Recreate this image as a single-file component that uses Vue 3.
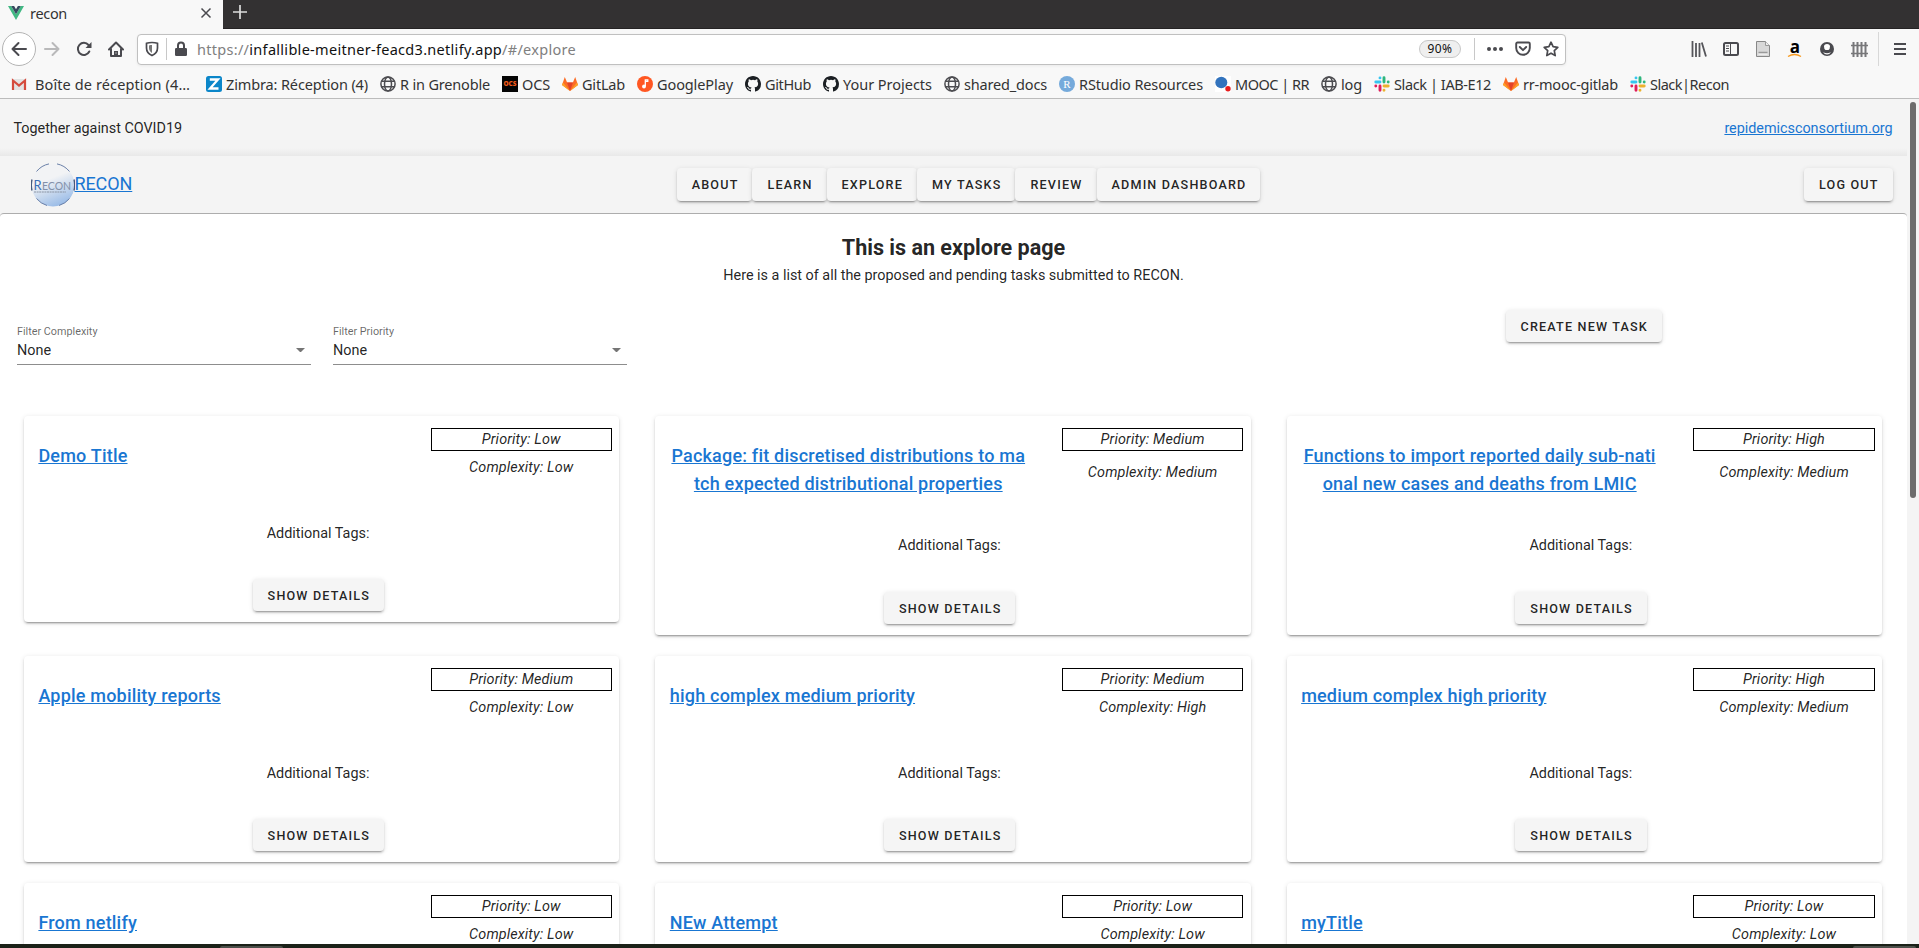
<script setup>
// Spreads the letters of a label so that it fills the given width.
const vFit = {
  mounted(el, binding) {
    el.style.letterSpacing = '0px'
    const natural = el.getBoundingClientRect().width
    el.style.letterSpacing = (binding.value - natural) / el.textContent.length + 'px'
  },
}

const bookmarks = [
  { icon: 'gmail', label: 'Boîte de réception (4…', width: 155 },
  { icon: 'zimbra', label: 'Zimbra: Réception (4)', width: 142 },
  { icon: 'globe', label: 'R in Grenoble', width: 90 },
  { icon: 'ocs', label: 'OCS', width: 28 },
  { icon: 'gitlab', label: 'GitLab', width: 43 },
  { icon: 'play', label: 'GooglePlay', width: 76 },
  { icon: 'github', label: 'GitHub', width: 46 },
  { icon: 'github', label: 'Your Projects', width: 89 },
  { icon: 'globe', label: 'shared_docs', width: 83 },
  { icon: 'rstudio', label: 'RStudio Resources', width: 124 },
  { icon: 'mooc', label: 'MOOC | RR', width: 74 },
  { icon: 'globe', label: 'log', width: 21 },
  { icon: 'slack', label: 'Slack | IAB-E12', width: 97 },
  { icon: 'gitlab', label: 'rr-mooc-gitlab', width: 95 },
  { icon: 'slack', label: 'Slack|Recon', width: 79 },
]

const nav = ['About', 'Learn', 'Explore', 'My tasks', 'Review', 'Admin dashboard']
const filters = ['Filter Complexity', 'Filter Priority']

const tasks = [
  { title: ['Demo Title'], priority: 'Low', complexity: 'Low' },
  { title: ['Package: fit discretised distributions to ma', 'tch expected distributional properties'], priority: 'Medium', complexity: 'Medium' },
  { title: ['Functions to import reported daily sub-nati', 'onal new cases and deaths from LMIC'], priority: 'High', complexity: 'Medium' },
  { title: ['Apple mobility reports'], priority: 'Medium', complexity: 'Low' },
  { title: ['high complex medium priority'], priority: 'Medium', complexity: 'High' },
  { title: ['medium complex high priority'], priority: 'High', complexity: 'Medium' },
  { title: ['From netlify'], priority: 'Low', complexity: 'Low' },
  { title: ['NEw Attempt'], priority: 'Low', complexity: 'Low' },
  { title: ['myTitle'], priority: 'Low', complexity: 'Low' },
]
</script>

<template>
  <div class="window">
    <div class="tabs">
      <div class="tab">
        <svg class="vue" width="16" height="14" viewBox="0 0 16 14">
          <path d="M0 0h3.2L8 8.3 12.8 0H16L8 14z" fill="#41b883" />
          <path d="M3.2 0H6.1L8 3.3 9.9 0h2.9L8 8.3z" fill="#35495e" />
        </svg>
        <span v-fit="37" class="tab-name">recon</span>
        <svg class="close" width="12" height="12" viewBox="0 0 12 12"><path d="M1.5 1.5l9 9M10.5 1.5l-9 9" stroke="#4a4a4f" stroke-width="1.5" /></svg>
      </div>
      <svg class="plus" width="14" height="14" viewBox="0 0 14 14"><path d="M7 0v14M0 7h14" stroke="#ddd" stroke-width="1.7" /></svg>
    </div>

    <div class="toolbar">
      <div class="back">
        <svg width="16" height="16" viewBox="0 0 16 16"><path d="M15 8H1.5M7.5 2L1.5 8l6 6" fill="none" stroke="#4a4a4f" stroke-width="2" stroke-linecap="round" stroke-linejoin="round" /></svg>
      </div>
      <svg class="tool" width="16" height="16" viewBox="0 0 16 16"><path d="M1 8h13.5M8.5 2l6 6-6 6" fill="none" stroke="#b9b9ba" stroke-width="2" stroke-linecap="round" stroke-linejoin="round" /></svg>
      <svg class="tool" width="16" height="16" viewBox="0 0 16 16"><path d="M13.3 10.5A6 6 0 1 1 12.5 4" fill="none" stroke="#4a4a4f" stroke-width="2" stroke-linecap="round" /><path d="M15.5 1v6h-6z" fill="#4a4a4f" /></svg>
      <svg class="tool" width="16" height="16" viewBox="0 0 16 16"><path d="M1 8.5L8 1.5l7 7M3 7.500V15h10V7.500" fill="none" stroke="#4a4a4f" stroke-width="2" stroke-linecap="round" stroke-linejoin="round" /><path d="M6 15v-5h4v5z" fill="#4a4a4f" /><path d="M8 11.5v1" stroke="#fff" /></svg>

      <div class="urlbar">
        <svg class="shield" width="14" height="16" viewBox="0 0 14 16"><path d="M7 1.500c2 0 4 .3 5.500.8V7c0 3.500-2 6-5.500 7.500C3.500 13 1.500 10.500 1.500 7V2.300C3 1.800 5 1.500 7 1.500z" fill="none" stroke="#4a4a4f" stroke-width="1.7" /><path d="M7 4v8C5 10.700 4 9 4 7V4.400C5 4.100 6 4 7 4z" fill="#777" /></svg>
        <i class="url-sep"></i>
        <svg class="lock" width="14" height="16" viewBox="0 0 14 16"><path d="M4 8V4.500a3 3 0 0 1 6 0V8" fill="none" stroke="#4a4a4f" stroke-width="2" /><rect x="1" y="7" width="12" height="8" rx="1.2" fill="#4a4a4f" /></svg>
        <span v-fit="379" class="url">https://<b>infallible-meitner-feacd3.netlify.app</b>/#/explore</span>
        <span class="zoom"><span v-fit="25">90%</span></span>
        <i class="url-sep right"></i>
        <svg width="16" height="16" viewBox="0 0 16 16" fill="#4a4a4f"><circle cx="2" cy="8" r="2" /><circle cx="8" cy="8" r="2" /><circle cx="14" cy="8" r="2" /></svg>
        <svg width="16" height="16" viewBox="0 0 16 16" fill="none" stroke="#4a4a4f" stroke-width="1.9" stroke-linecap="round" stroke-linejoin="round"><path d="M2.500 1.500h11q1.300 0 1.300 1.300V7a6.800 6.800 0 0 1-13.600 0V2.800q0-1.300 1.300-1.300z" /><path d="M4.800 6L8 9.200 11.200 6" /></svg>
        <svg width="16" height="16" viewBox="0 0 16 16"><path d="M8 1.200l2.100 4.500 4.700.6-3.500 3.300.9 5L8 12.200l-4.200 2.400.9-5L1.200 6.300l4.700-.6z" fill="none" stroke="#4a4a4f" stroke-width="1.7" stroke-linejoin="round" /></svg>
      </div>

      <div class="tools">
        <svg width="16" height="16" viewBox="0 0 16 16" stroke="#55555a" stroke-width="1.8"><path d="M1.500 0v16M5 2v14M8.500 2v14M10.800 1.500L15 15.500" /></svg>
        <svg width="16" height="16" viewBox="0 0 16 16"><rect x="1" y="2" width="14" height="12" rx="1.500" fill="none" stroke="#4a4a4f" stroke-width="2" /><path d="M7.500 2v12M3 5h3M3 7.500h3M3 10h3" stroke="#4a4a4f" /></svg>
        <svg width="16" height="16" viewBox="0 0 16 16"><path d="M1.500.5h9l4 4v11h-13z" fill="#d8d8d8" stroke="#888" /><path d="M10.500.5v4h4" fill="#eee" stroke="#999" /><path d="M3.500 13h9" stroke="#fff" /><path d="M3.500 11.500h9" stroke="#999" stroke-width="1.500" /></svg>
        <svg width="16" height="17" viewBox="0 0 16 17"><text x="8" y="11.500" text-anchor="middle" font-family="Open Sans, sans-serif" font-size="17" font-weight="700">a</text><path d="M1 15.500q6.500-4 13 0" fill="none" stroke="#f79a1f" stroke-width="1.4" /></svg>
        <svg width="16" height="16" viewBox="0 0 16 16"><circle cx="8" cy="8" r="7" fill="#4a4a4f" /><path d="M5 5.500q0-2.500 3-2.500t3 2.500-1.500 3.500h-3Q5 8 5 5.500zM4 11q4 2.500 8 0-1.500 2.500-4 2.500T4 11z" fill="#fff" /></svg>
        <svg width="17" height="17" viewBox="0 0 17 17" stroke="#77777a"><path d="M2.500 1v15M6.500 1v15M10.500 1v15M14.500 1v15" stroke-width="2" /><path d="M0 4.500h17M0 12.500h17" stroke-width="1.3" /></svg>
      </div>
      <i class="menu-sep"></i>
      <svg class="menu" width="12" height="14" viewBox="0 0 12 14"><path d="M0 2h12M0 7h12M0 12h12" stroke="#4a4a4f" stroke-width="1.8" /></svg>
    </div>

    <div class="bookmarks">
      <div v-for="(b, i) in bookmarks" :key="i" class="bookmark" :class="b.icon">
        <svg v-if="b.icon === 'gmail'" width="16" height="16" viewBox="0 0 16 16"><rect x="1" y="3" width="14" height="11" fill="#e3e3e3" /><path d="M2 14V4.500L8 9.500l6-5V14" fill="none" stroke="#d54b3d" stroke-width="2.2" /></svg>
        <svg v-else-if="b.icon === 'zimbra'" width="16" height="16" viewBox="0 0 16 16"><rect width="16" height="16" rx="2.500" fill="#0b86c9" /><path d="M3.800 3.500h8.200L4 12.500h8.500" fill="none" stroke="#fff" stroke-width="2.3" /></svg>
        <svg v-else-if="b.icon === 'globe'" width="16" height="16" viewBox="0 0 16 16" fill="none" stroke="#4c4c50" stroke-width="1.5"><circle cx="8" cy="8" r="7.1" /><ellipse cx="8" cy="8" rx="3.5" ry="7.1" /><path d="M1.500 5.300h13M1.500 10.700h13" /></svg>
        <svg v-else-if="b.icon === 'ocs'" width="16" height="16" viewBox="0 0 16 16"><rect width="16" height="16" fill="#050505" /><text x="8" y="10.200" text-anchor="middle" textLength="13" lengthAdjust="spacingAndGlyphs" font-family="Open Sans, sans-serif" font-size="6.5" font-weight="800" fill="#f05a1a">OCS</text></svg>
        <svg v-else-if="b.icon === 'gitlab'" width="16" height="16" viewBox="0 0 16 16"><path d="M8 15L0 9l2.800-8 2.300 5.500h5.800L13.200 1 16 9z" fill="#fc6d26" /><path d="M8 15L5 6.500h6z" fill="#e24329" /><path d="M8 15L0 9l1-2.500zM8 15l8-6-1-2.500z" fill="#fca326" /></svg>
        <svg v-else-if="b.icon === 'play'" width="16" height="16" viewBox="0 0 16 16"><circle cx="8" cy="8" r="8" fill="#ff5722" /><path d="M8.300 10.300V3.800h2.500v1.500H8.300" fill="none" stroke="#fff" stroke-width="1.3" /><circle cx="7" cy="10.500" r="1.9" fill="#fff" /></svg>
        <svg v-else-if="b.icon === 'github'" width="16" height="16" viewBox="0 0 16 16"><path fill="#1b1f23" d="M8 0C3.580 0 0 3.580 0 8c0 3.540 2.290 6.530 5.470 7.590.4.070.55-.17.55-.38 0-.19-.01-.82-.01-1.490-2.010.37-2.530-.49-2.690-.94-.09-.23-.48-.94-.82-1.130-.28-.15-.68-.52-.01-.53.63-.01 1.080.58 1.230.82.72 1.210 1.870.87 2.330.66.07-.52.28-.87.51-1.070-1.780-.2-3.640-.89-3.640-3.950 0-.87.31-1.590.82-2.150-.08-.2-.36-1.020.08-2.120 0 0 .67-.21 2.200.82a7.600 7.600 0 0 1 4 0c1.530-1.040 2.200-.82 2.200-.82.44 1.100.16 1.920.08 2.120.51.56.82 1.270.82 2.150 0 3.070-1.870 3.750-3.650 3.950.29.25.54.73.54 1.480 0 1.070-.01 1.930-.01 2.200 0 .21.15.46.55.38A8 8 0 0 0 16 8c0-4.420-3.580-8-8-8z" /></svg>
        <svg v-else-if="b.icon === 'rstudio'" width="16" height="16" viewBox="0 0 16 16"><circle cx="8" cy="8" r="8" fill="#75aadb" /><text x="8" y="12" text-anchor="middle" font-family="Liberation Serif, serif" font-size="11" fill="#fff">R</text></svg>
        <svg v-else-if="b.icon === 'mooc'" width="16" height="16" viewBox="0 0 16 16"><rect width="16" height="16" fill="#fff" /><ellipse cx="6.3" cy="6.5" rx="6" ry="5.8" fill="#3273bd" /><circle cx="13" cy="12.8" r="2.7" fill="#e81d1d" /></svg>
        <svg v-else width="16" height="16" viewBox="0 0 16 16" fill="none" stroke-width="2.9" stroke-linecap="round"><path d="M6 1.900h0M1.800 6H6" stroke="#36c5f0" /><path d="M10 1.800V6M14.200 6h0" stroke="#2eb67d" /><path d="M10 10h4.200M10 14.200h0" stroke="#ecb22e" /><path d="M6 10v4.200M1.800 10h0" stroke="#e01e5a" /></svg>
        <span v-fit="b.width">{{ b.label }}</span>
      </div>
    </div>

    <div class="viewport">
      <div class="page">
        <header class="top">
          <span>Together against COVID19</span>
          <a>repidemicsconsortium.org</a>
        </header>
        <header class="nav">
          <div class="brand">
            <svg width="44" height="44" viewBox="0 0 44 44">
              <defs>
                <linearGradient id="sphere" x1=".3" y1="0" x2=".7" y2="1"><stop offset=".35" stop-color="#f2f3f5" /><stop offset="1" stop-color="#94b8e6" /></linearGradient>
              </defs>
              <circle cx="22" cy="22" r="21.5" fill="url(#sphere)" />
              <g fill="none" stroke="#6a80a8" stroke-width="1"><path d="M5.500 8.500A21.500 21.500 0 0 1 18 .9M26 .9A21.500 21.500 0 0 1 38.500 8.500M5.500 35.500A21.500 21.500 0 0 0 16 42.500M28 42.500A21.500 21.500 0 0 0 38.500 35.500" /><path d="M1 16.500a22 22 0 0 0 0 11M43 16.500a22 22 0 0 1 0 11" stroke="#46587c" stroke-width="1.4" /></g>
              <text x="2.500" y="26.500" font-family="Lato, sans-serif" font-size="13" fill="#3d6db5">R</text>
              <text x="11" y="26.500" font-family="Lato, sans-serif" font-size="10.500" textLength="29" fill="#8390a8">ECON</text>
              <path d="M3 29h32" stroke="#8a94a4" stroke-width="1" stroke-dasharray="2 .6" />
            </svg>
            <a>RECON</a>
          </div>
          <nav class="links"><button v-for="n in nav" :key="n" class="btn">{{ n }}</button></nav>
          <button class="btn logout">Log out</button>
        </header>

        <main class="main">
          <h2>This is an explore page</h2>
          <p class="intro">Here is a list of all the proposed and pending tasks submitted to RECON.</p>

          <div class="controls">
            <div v-for="f in filters" :key="f" class="filter">
              <label>{{ f }}</label>
              <div class="value">None<i class="caret"></i></div>
            </div>
            <button class="btn create">Create new task</button>
          </div>

          <section class="grid">
            <article v-for="(t, i) in tasks" :key="i" class="card" :class="{ tall: t.title.length > 1 }">
              <div class="head">
                <a class="title"><template v-for="(line, n) in t.title" :key="n"><br v-if="n" />{{ line }}</template></a>
                <div class="meta">
                  <div class="priority">Priority: {{ t.priority }}</div>
                  <div class="complexity">Complexity: {{ t.complexity }}</div>
                </div>
              </div>
              <div class="tags">Additional Tags:</div>
              <button class="btn details">Show details</button>
            </article>
          </section>
        </main>
      </div>
      <div class="scrollbar"><div class="thumb"></div></div>
    </div>
    <div class="desktop"><i></i><i></i></div>
  </div>
</template>

<style>
body { margin: 0; overflow: hidden; }
</style>

<style scoped>
* { box-sizing: border-box; }
.window { width: 1919px; height: 948px; display: flex; flex-direction: column; overflow: hidden; background: #f8f8f8; font-family: "Noto Sans", sans-serif; color: #333; }
svg { flex: none; display: block; }
span { white-space: nowrap; }
.tabs { height: 29px; flex: none; background: #333132; display: flex; box-shadow: inset 0 -1px #252324; }
.tab { width: 223px; background: #f8f8f8; display: flex; align-items: center; padding: 0 11px 3px 8px; font-size: 14.5px; }
.tab-name { margin: -1px 0 0 6px; }
.close { margin-left: auto; }
.plus { margin: 5px 0 0 10px; }
.toolbar { height: 41px; flex: none; display: flex; align-items: center; padding: 0 0 1px 2px; }
.back { width: 34px; height: 34px; border: 1px solid #b4b4b4; border-radius: 50%; background: #fff; display: flex; align-items: center; justify-content: center; margin-right: -8px; }
.tool { margin-left: 16px; }
.urlbar { margin-left: 13px; width: 1429px; height: 31px; border: 1px solid #c0c0c0; border-radius: 4px; background: #fff; display: flex; align-items: center; padding: 0 6px 0 7px; box-shadow: 0 1px 3px rgba(0,0,0,.06); gap: 12px; }
.url-sep { width: 1px; height: 22px; background: #c8c8c8; margin-left: -5px; margin-right: -5px; }
.url-sep.right { margin: 0 0 0 1px; }
.url { font-size: 14.5px; color: #808080; margin-left: -3px; }
.url b { font-weight: 400; color: #111; }
.zoom { margin-left: auto; width: 42px; height: 18px; border: 1px solid #c8c8c8; border-radius: 9px; background: #efefef; font-size: 12px; line-height: 16px; text-align: center; color: #111; }
.tools { display: flex; align-items: center; gap: 16px; margin-left: 125px; }
.menu-sep { width: 1px; height: 34px; background: #d8d8d8; margin: 0 15px 0 10px; }
.bookmarks { height: 29px; flex: none; display: flex; align-items: center; gap: 12px; padding: 0 0 1px 11px; border-bottom: 1px solid #bcbcbc; font-size: 14.5px; }
.bookmark { display: flex; align-items: center; gap: 4px; height: 20px; }
.bookmark.gmail { gap: 8px; margin-right: 4px; }

.viewport { height: 845px; flex: none; display: flex; overflow: hidden; font-family: Roboto, sans-serif; font-size: 14.4px; color: rgba(0,0,0,.87); background: #f4f4f4; }
.page { width: 1907px; height: 845px; overflow: hidden; }
.scrollbar { width: 12px; padding: 3px 3px 0; }
.thumb { width: 6px; height: 396px; border-radius: 3px; background: #6d6d6d; }
a { color: #1976d2; text-decoration: underline; }
.top { height: 57px; display: flex; justify-content: space-between; align-items: center; padding: 1px 14.4px 0 13.5px; letter-spacing: -.03px; background: linear-gradient(#f4f4f4 86%, #e8e8e8); }
.nav { height: 57px; background: #f4f4f4; display: grid; grid-template-columns: 1fr auto 1fr; align-items: center; padding: 0 14.4px 0 30.5px; }
.brand { display: flex; align-items: center; font-size: 18px; line-height: 24px; }
.brand a { margin-top: -1px; letter-spacing: -.1px; }
.links { display: flex; margin-left: 14px; }
.btn { font: 500 12.6px Roboto, sans-serif; letter-spacing: 1.18px; text-transform: uppercase; color: rgba(0,0,0,.87); height: 32.4px; padding: 0 14px 0 15px; border: 0; border-radius: 4px; background: #f5f5f5; box-shadow: 0 3px 1px -2px rgba(0,0,0,.2), 0 2px 2px rgba(0,0,0,.14), 0 1px 5px rgba(0,0,0,.12); white-space: nowrap; }
.logout { justify-self: end; }
.main { height: 740px; background: #fff; border-top: 1px solid #adadad; border-radius: 4px 4px 0 0; }
h2 { margin: 22px 0 0; font-size: 21.6px; line-height: 24px; font-weight: 700; text-align: center; letter-spacing: -.03px; }
.intro { margin: 5px 0 0; line-height: 22px; text-align: center; letter-spacing: -.01px; }
.controls { display: flex; align-items: flex-start; padding: 22px 0 0 17px; gap: 22px; height: 129px; }
.filter { width: 294px; margin-top: 13px; border-bottom: 1px solid #8d8d8d; }
.filter label { display: block; font-size: 10.8px; line-height: 14px; color: rgba(0,0,0,.6); margin-top: 3px; }
.value { height: 25px; line-height: 23px; display: flex; justify-content: space-between; }
.caret { border: 4.5px solid transparent; border-top-color: #757575; border-bottom: 0; width: 9px; height: 5px; margin: 9px 6px 0 0; }
.create { margin: 1px 0 0 856.5px; }
.grid { display: grid; grid-template-columns: repeat(3, 595.2px); column-gap: 36.2px; row-gap: 20.8px; align-items: start; padding-left: 24px; }
.card { height: 206.4px; border-radius: 4px; background: #fff; display: flex; flex-direction: column; align-items: center; padding-bottom: 11px; box-shadow: 0 3px 1px -2px rgba(0,0,0,.2), 0 2px 2px rgba(0,0,0,.14), 0 1px 5px rgba(0,0,0,.12); }
.card.tall { height: 219.3px; }
.head { align-self: stretch; height: 107px; display: flex; justify-content: space-between; padding: 11.5px 7.2px 0 14.4px; }
.tall .head { height: 119px; }
.title { font-size: 18px; font-weight: 500; line-height: 28.8px; letter-spacing: .2px; margin-top: 14px; white-space: nowrap; }
.tall .title { width: 357px; text-align: center; }
.meta { width: 181.5px; text-align: center; font-style: italic; letter-spacing: .13px; }
.priority { height: 23px; line-height: 21px; border: 1px solid #000; }
.complexity { line-height: 22px; margin-top: 6px; }
.tall .complexity { margin-top: 11px; }
.tags { line-height: 22px; margin-right: 7px; }
.details { margin: auto 6.5px 0 0; }
.desktop { height: 4px; flex: none; background: #1b2118; display: flex; justify-content: space-between; align-items: flex-end; padding: 0 3px 0 220px; }
.desktop i { width: 63px; height: 2px; background: #4c504a; border-radius: 2px 2px 0 0; }
</style>
